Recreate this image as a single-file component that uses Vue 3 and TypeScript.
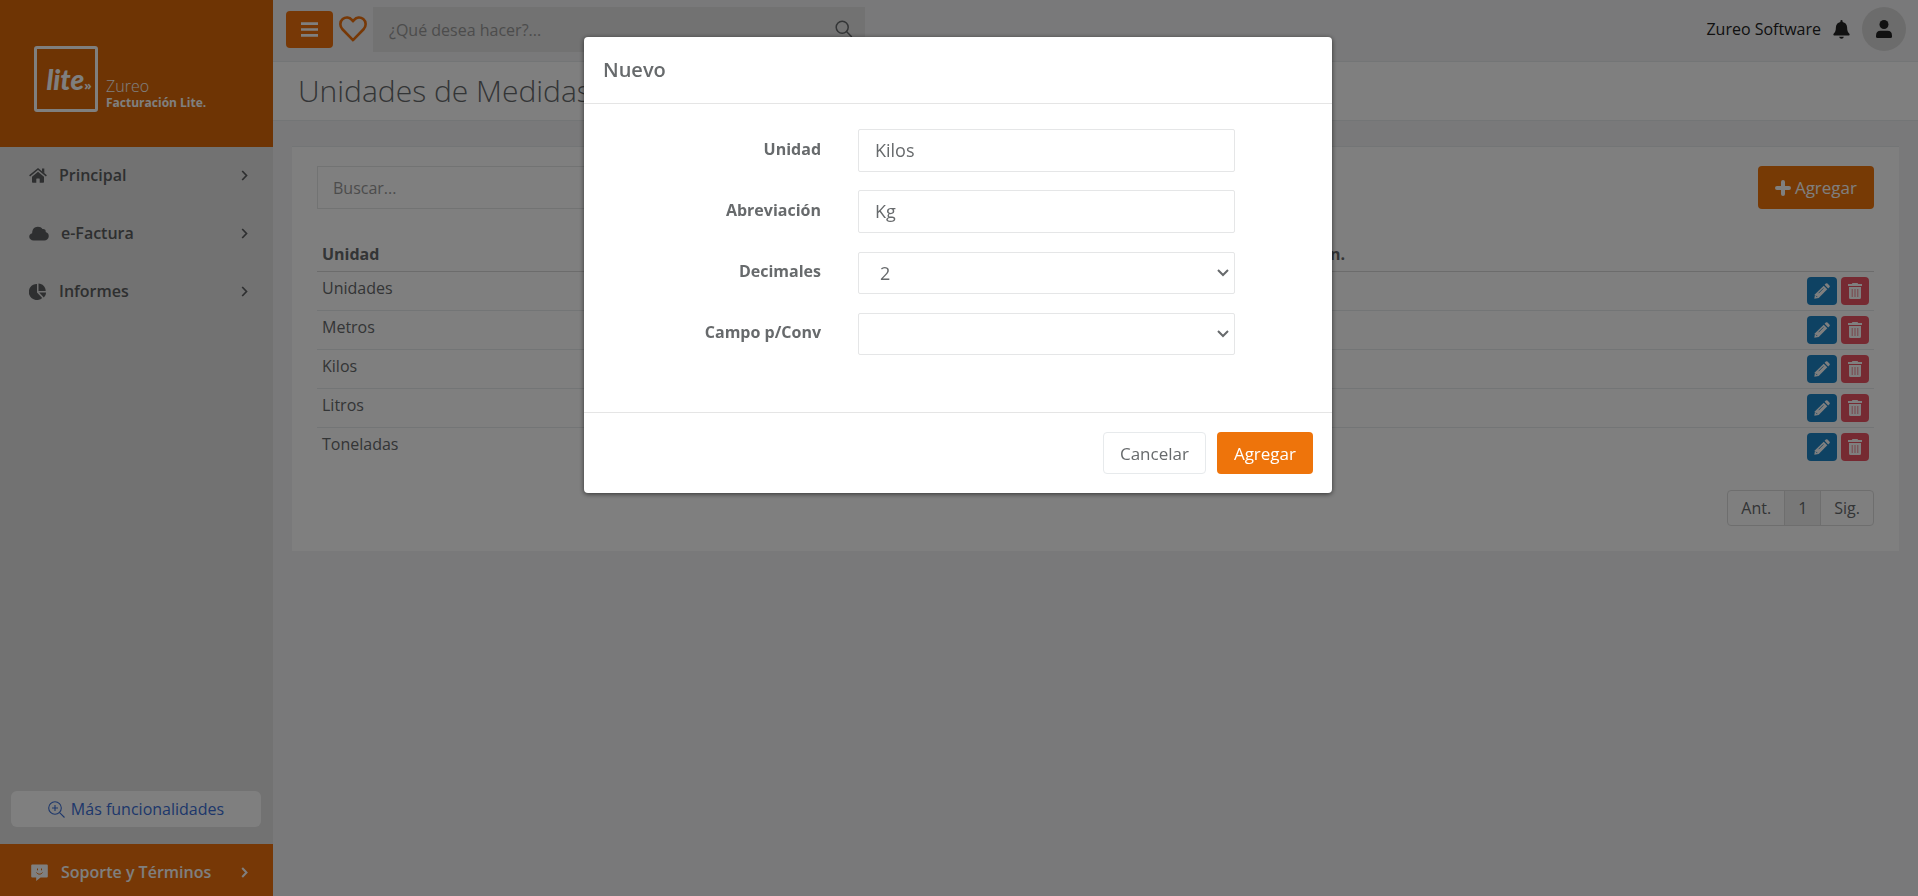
<script setup lang="ts">
import { ref } from 'vue'

interface Unit {
  name: string
  short: string
  decimals: number
}

const units: Unit[] = [
  { name: 'Unidades', short: 'Un', decimals: 0 },
  { name: 'Metros', short: 'Mt', decimals: 2 },
  { name: 'Kilos', short: 'Kg', decimals: 2 },
  { name: 'Litros', short: 'Lt', decimals: 2 },
  { name: 'Toneladas', short: 'Tn', decimals: 2 },
]

const nav = [
  { label: 'Principal', icon: 'home' },
  { label: 'e-Factura', icon: 'cloud' },
  { label: 'Informes', icon: 'pie' },
]

const unitName = ref('Kilos')
const unitShort = ref('Kg')
const decimals = ref('2')
const field = ref('')
</script>

<template>
  <div class="layout">
    <aside class="sidebar">
      <div class="brand">
        <div class="brand-box"><span class="brand-lite">lite</span><span class="brand-mark">»</span></div>
        <div class="brand-text">
          <span class="brand-name">Zureo</span>
          <strong class="brand-product">Facturación Lite.</strong>
        </div>
      </div>
      <nav class="nav">
        <a v-for="item in nav" :key="item.icon" href="#" class="nav-link">
          <svg v-if="item.icon === 'home'" width="18" height="15" viewBox="0 0 18 15" fill="currentColor">
            <path d="M3 8.800 9 3.800l6 5v5.200q0 .8-.8.8h-3.500v-3.800q0-.5-.5-.5H7.800q-.5 0-.5.5v3.800H3.800q-.8 0-.8-.8z" />
            <path d="M.6 7.900 9 1l8.400 6.900" fill="none" stroke="currentColor" stroke-width="1.500" />
            <path d="M13 .4h2.300v5L13 3.500z" />
          </svg>
          <svg v-else-if="item.icon === 'cloud'" width="20" height="15" viewBox="0 0 17 15" preserveAspectRatio="none" fill="currentColor">
            <path d="M4 14.400C1.800 14.400.2 12.700.2 10.700c0-1.700 1-3 2.500-3.500C2.600 3.500 4.500.7 7.500.7c1.800 0 3.200.9 3.900 2.300 1.700-.4 3.200 1 2.800 2.900 1.700.6 2.700 2.200 2.600 4.300-.1 2.500-1.700 4.200-3.900 4.200z" />
          </svg>
          <svg v-else width="18" height="17" viewBox="0 0 18 17" fill="currentColor">
            <path d="M8 1v8.500l5.200 5.400A8 8 0 1 1 8 1z" />
            <path d="M9.500.5c4 .2 7 3.300 7.200 7.500H9.500z" />
            <path d="M10.200 9.500H17c0 2-.8 3.600-2.200 4.900z" />
          </svg>
          <span>{{ item.label }}</span>
          <svg class="chevron" width="7" height="11" viewBox="0 0 7 11" fill="none" stroke="currentColor" stroke-width="1.700"><path d="M1.200 1l4.300 4.500L1.200 10" /></svg>
        </a>
      </nav>
      <button type="button" class="more">
        <svg width="17" height="17" viewBox="0 0 17 17" fill="none" stroke="currentColor" stroke-width="1.100">
          <circle cx="7" cy="7" r="6.300" /><path d="M11.600 11.600l4.900 4.900M7 4v6M4 7h6" />
        </svg>
        Más funcionalidades
      </button>
      <a href="#" class="support">
        <svg width="17" height="17" viewBox="0 0 17 17">
          <path fill="currentColor" d="M1.200.5h14.600q1 0 1 1v11q0 1-1 1H9.600L5.200 17v-3.500h-4q-1 0-1-1v-11q0-1 1-1z" />
          <path d="M6.500 4.500v1.800M10.500 4.500v1.800M5.500 8.500c1.400 2.200 4.600 2.200 6 0" fill="none" stroke="#ee700c" stroke-width="1" />
        </svg>
        <span>Soporte y Términos</span>
        <svg class="chevron" width="7" height="11" viewBox="0 0 7 11" fill="none" stroke="currentColor" stroke-width="2"><path d="M1.200 1l4.300 4.500L1.200 10" /></svg>
      </a>
    </aside>

    <div class="content">
      <header class="topbar">
        <button type="button" class="menu-button" aria-label="Menú">
          <svg width="17" height="15" viewBox="0 0 17 15" fill="none" stroke="currentColor" stroke-width="2.600"><path d="M0 1.600h17M0 7.500h17M0 13.400h17" /></svg>
        </button>
        <button type="button" class="heart" aria-label="Favoritos">
          <svg width="28" height="26" viewBox="0 0 28 26" fill="none" stroke="currentColor" stroke-width="2.600" stroke-linejoin="round">
            <path d="M14 24.200 3.200 13C.6 10.100.8 5.500 3.700 3.100c3-2.400 6.800-1.900 9.200.8L14 5.200l1.100-1.300c2.400-2.700 6.200-3.200 9.200-.8 2.900 2.400 3.100 7 .5 9.900z" />
          </svg>
        </button>
        <div class="quick">
          <input type="text" placeholder="¿Qué desea hacer?..." aria-label="¿Qué desea hacer?" />
          <svg width="18" height="18" viewBox="0 0 18 18" fill="none" stroke="currentColor" stroke-width="1.500"><circle cx="7.200" cy="7.200" r="6" /><path d="M11.500 11.500l5.300 5.500" /></svg>
        </div>
        <div class="user">
          <span>Zureo Software</span>
          <svg width="17" height="19" viewBox="0 0 17 19" fill="currentColor">
            <path d="M8.500 0q1.100 0 1.100 1.200v.7c2.700.5 4.500 2.600 4.500 5.400 0 3.600.8 5 2.100 6.200q.8.800.3 1.500-.3.500-1 .5h-14q-.7 0-1-.5-.5-.7.300-1.500C2.100 12.300 2.900 10.900 2.900 7.300c0-2.800 1.800-4.900 4.500-5.400v-.7Q7.400 0 8.500 0z" /><path d="M6.200 16.700h4.600c-.2 1.300-1.100 2-2.300 2s-2.100-.7-2.300-2z" />
          </svg>
          <button type="button" class="avatar" aria-label="Cuenta">
            <svg width="16" height="18" viewBox="0 0 16 18" fill="currentColor"><circle cx="8" cy="4.500" r="4.500" /><path d="M4.500 10.700h7q4.500 0 4.500 5v.8q0 1.500-1.500 1.500h-13Q0 18 0 16.500v-.8q0-5 4.500-5z" /></svg>
          </button>
        </div>
      </header>
      <div class="heading"><h1>Unidades de Medidas</h1></div>

      <main class="card">
        <div class="toolbar">
          <input class="filter" type="text" placeholder="Buscar..." aria-label="Buscar" />
          <button type="button" class="primary">
            <svg width="16" height="16" viewBox="0 0 16 16" fill="none" stroke="currentColor" stroke-width="4" stroke-linecap="round"><path d="M8 2v12M2 8h12" /></svg>
            Agregar
          </button>
        </div>
        <table>
          <thead>
            <tr><th class="name">Unidad</th><th>Abreviación</th><th>Decimales</th><th class="conversion">Conversión.</th><th class="actions"></th></tr>
          </thead>
          <tbody>
            <tr v-for="unit in units" :key="unit.name">
              <td>{{ unit.name }}</td>
              <td>{{ unit.short }}</td>
              <td>{{ unit.decimals }}</td>
              <td></td>
              <td>
                <div class="row-actions">
                  <button type="button" class="edit" :aria-label="'Editar ' + unit.name">
                    <svg width="16" height="16" viewBox="0 0 16 16">
                      <path fill="currentColor" d="M9.700 2.700l3.600 3.600-8.600 8.600L.3 15.700l.7-4.400z" /><path fill="currentColor" d="M10.600 1.800 11.800.6q.8-.8 1.700 0l1.900 1.900q.8.900 0 1.700l-1.200 1.200z" />
                      <path d="M4.600 10.200l4.800-4.800M1.900 12.700l1.400 1.400" fill="none" stroke="#1c84c6" stroke-width=".8" />
                    </svg>
                  </button>
                  <button type="button" class="delete" :aria-label="'Eliminar ' + unit.name">
                    <svg width="14" height="16" viewBox="0 0 14 16">
                      <path fill="currentColor" d="M4.500 0h5l.7 1H14v2H0V1h3.800zM1 4h12v10.500q0 1.500-1.500 1.500h-9Q1 16 1 14.500z" />
                      <path d="M4.200 6v8M7 6v8M9.800 6v8" stroke="#ed5565" stroke-width=".7" />
                    </svg>
                  </button>
                </div>
              </td>
            </tr>
          </tbody>
        </table>
        <div class="pager">
          <button type="button">Ant.</button><button type="button" class="current">1</button><button type="button">Sig.</button>
        </div>
      </main>
    </div>

    <div class="backdrop">
      <form class="modal" role="dialog" aria-modal="true" aria-labelledby="modal-title" @submit.prevent>
        <div class="modal-header"><h2 id="modal-title">Nuevo</h2></div>
        <div class="modal-body">
          <label for="unit-name">Unidad</label>
          <input id="unit-name" v-model="unitName" type="text" />
          <label for="unit-short">Abreviación</label>
          <input id="unit-short" v-model="unitShort" type="text" />
          <label for="unit-decimals">Decimales</label>
          <select id="unit-decimals" v-model="decimals">
            <option>0</option><option>1</option><option>2</option><option>3</option>
          </select>
          <label for="unit-field">Campo p/Conv</label>
          <select id="unit-field" v-model="field"><option value=""></option></select>
        </div>
        <div class="modal-footer">
          <button type="button" class="cancel">Cancelar</button>
          <button type="submit" class="primary">Agregar</button>
        </div>
      </form>
    </div>
  </div>
</template>

<style>
body {
  margin: 0;
}
</style>

<style scoped>
* {
  box-sizing: border-box;
}
.layout {
  display: flex;
  min-height: 100vh;
  font-family: 'Open Sans', 'Noto Sans', sans-serif;
  font-size: 16px;
  color: #676a6c;
  background: #f3f3f4;
}
button,
input,
select {
  font: inherit;
  color: inherit;
}
button {
  padding: 0;
  border: 0;
  background: none;
}
svg {
  flex: none;
  display: block;
}
a {
  color: inherit;
  text-decoration: none;
}

.sidebar {
  flex: none;
  display: flex;
  flex-direction: column;
  width: 273px;
  background: #e4e4e4;
}
.brand {
  display: flex;
  align-items: flex-end;
  gap: 8px;
  height: 147px;
  padding: 0 0 35px 34px;
  color: #fff;
  background: #dc6808;
}
.brand-box {
  display: flex;
  align-items: center;
  justify-content: center;
  width: 64px;
  height: 66px;
  padding-left: 6px;
  border: 3px solid #fff;
  border-radius: 3px;
}
.brand-lite {
  font-family: Lato, 'Open Sans', sans-serif;
  font-size: 28px;
  font-style: italic;
  font-weight: 900;
  line-height: 28px;
}
.brand-mark {
  padding-top: 12px;
  font-size: 12px;
  font-weight: 700;
}
.brand-text {
  display: flex;
  flex-direction: column;
}
.brand-name {
  font-size: 16px;
  font-weight: 300;
  line-height: 16px;
}
.brand-product {
  font-size: 12px;
  line-height: 18px;
}
.nav {
  flex: 1;
}
.nav-link {
  display: flex;
  align-items: center;
  gap: 12px;
  height: 58px;
  padding: 0 25px 2px 29px;
  font-weight: 600;
  color: #5c5e60;
}
.chevron {
  margin-left: auto;
}
.more {
  display: flex;
  align-items: center;
  justify-content: center;
  gap: 6px;
  height: 36px;
  margin: 0 12px 17px 11px;
  border-radius: 6px;
  color: #3c6fd6;
  background: #fff;
}
.support {
  display: flex;
  align-items: center;
  gap: 13px;
  height: 52px;
  padding: 4px 25px 0 31px;
  font-weight: 600;
  color: #fff;
  background: #ee700c;
}

.content {
  flex: 1;
  min-width: 0;
}
.topbar {
  display: flex;
  align-items: center;
  height: 62px;
  padding: 0 12px 3px 13px;
  border-bottom: 1px solid #e7eaec;
}
.menu-button {
  display: flex;
  align-items: center;
  justify-content: center;
  width: 47px;
  height: 37px;
  border-radius: 4px;
  color: #fff;
  background: #ee700c;
}
.heart {
  margin: 0 6px;
  color: #ee700c;
}
.quick {
  display: flex;
  align-items: center;
  width: 492px;
  height: 45px;
  padding: 0 12px 0 16px;
  background: #e4e4e4;
}
.quick input {
  flex: 1;
  min-width: 0;
  padding: 2px 0 0;
  border: 0;
  background: none;
}
input::placeholder {
  color: #999;
  opacity: 1;
}
.user {
  display: flex;
  align-items: center;
  gap: 12px;
  margin-left: auto;
  color: #222;
}
.avatar {
  display: flex;
  align-items: center;
  justify-content: center;
  width: 44px;
  height: 44px;
  border-radius: 50%;
  color: #222;
  background: #d8d8d8;
}
.heading {
  height: 59px;
  padding: 8px 25px;
  border-bottom: 1px solid #e7eaec;
  background: #fff;
}
h1 {
  margin: 0;
  font-size: 30px;
  font-weight: 300;
  line-height: 41px;
}

.card {
  margin: 25px 19px 0;
  padding: 19px 25px 25px;
  border-top: 1px solid #e7eaec;
  background: #fff;
}
.toolbar {
  display: flex;
  justify-content: space-between;
}
.filter {
  width: 380px;
  height: 43px;
  padding: 0 15px;
  border: 1px solid #e5e6e7;
}
.primary,
.cancel {
  display: flex;
  align-items: center;
  gap: 4px;
  height: 42px;
  border-radius: 4px;
  font-size: 17px;
}
.primary {
  padding: 0 17px;
  color: #fff;
  background: #ee740b;
}
.toolbar .primary {
  height: 43px;
}
table {
  width: 100%;
  margin-top: 27px;
  border-collapse: collapse;
  table-layout: fixed;
}
th {
  height: 35px;
  padding: 2px 5px 0;
  text-align: left;
  border-bottom: 1px solid #d9d9d9;
}
.name {
  width: 275px;
}
.conversion {
  width: 348px;
  text-align: right;
}
.actions {
  width: 524px;
}
td {
  height: 39px;
  padding: 5px;
  line-height: 22px;
  vertical-align: top;
  border-bottom: 1px solid #e7eaec;
}
tbody tr:last-child td {
  border-bottom: 0;
}
.row-actions {
  display: flex;
  justify-content: flex-end;
  gap: 4px;
}
.edit,
.delete {
  display: flex;
  align-items: center;
  justify-content: center;
  height: 28px;
  border-radius: 4px;
  color: #fff;
}
.edit {
  width: 30px;
  background: #1c84c6;
}
.delete {
  width: 28px;
  background: #ed5565;
}
.pager {
  display: flex;
  width: max-content;
  margin: 24px 0 0 auto;
  border: 1px solid #ddd;
  border-radius: 4px;
}
.pager button {
  height: 34px;
  padding: 0 13px;
}
.pager .current {
  border: 1px solid #ddd;
  border-width: 0 1px;
  background: #f0f0f0;
}

.backdrop {
  position: fixed;
  inset: 0;
  display: flex;
  align-items: flex-start;
  justify-content: center;
  padding: 37px 2px 0 0;
  background: rgba(0, 0, 0, 0.5);
}
.modal {
  width: 748px;
  border-radius: 4px;
  background: #fff;
  box-shadow: 0 1px 5px rgba(0, 0, 0, 0.6);
}
.modal-header {
  padding: 20px 19px;
  border-bottom: 1px solid #e5e5e5;
}
h2 {
  margin: 0;
  font-size: 20px;
  font-weight: 600;
  line-height: 26px;
}
.modal-body {
  display: grid;
  grid-template-columns: 237px 377px;
  grid-auto-rows: 43px;
  column-gap: 37px;
  row-gap: 18px;
  padding: 25px 0 57px;
}
.modal-body label {
  padding-top: 8px;
  font-weight: 700;
  line-height: 24px;
  text-align: right;
}
.modal-body input,
.modal-body select {
  height: 43px;
  padding: 0 16px 2px;
  border: 1px solid #e5e6e7;
  border-radius: 2px;
  font-size: 18px;
  background: #fff;
}
.modal-body select {
  align-self: end;
  height: 42px;
  padding: 0 30px 0 21px;
  appearance: none;
  background: #fff url("data:image/svg+xml,%3Csvg xmlns='http://www.w3.org/2000/svg' width='12' height='8' fill='none' stroke='%23676a6c' stroke-width='2'%3E%3Cpath d='M1 1l5 5 5-5'/%3E%3C/svg%3E") no-repeat right 5px center;
}
.modal-footer {
  display: flex;
  justify-content: flex-end;
  gap: 11px;
  padding: 19px;
  border-top: 1px solid #e5e5e5;
}
.cancel {
  padding: 0 16px;
  border: 1px solid #e7eaec;
}
</style>
